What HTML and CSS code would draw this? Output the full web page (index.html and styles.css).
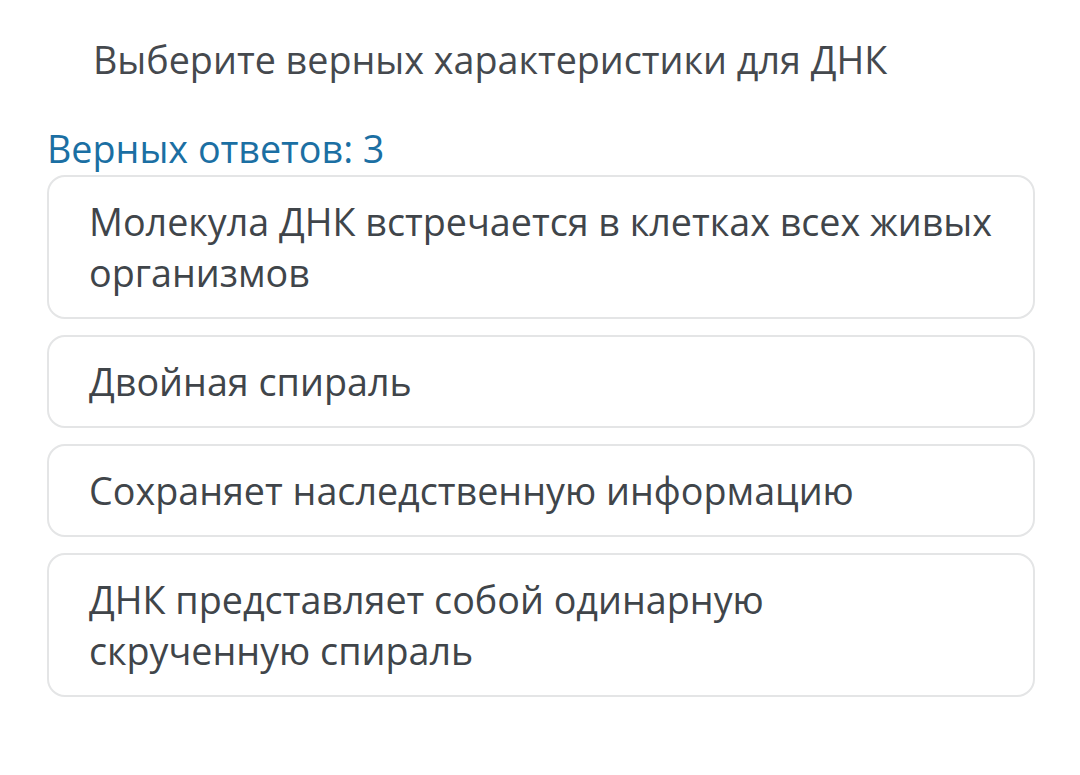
FILE: index.html
```html
<!DOCTYPE html>
<html lang="ru">
<head>
<meta charset="utf-8">
<link rel="stylesheet" href="styles.css">
</head>
<body>
<main class="quiz">
  <h1 class="question">Выберите верных характеристики для ДНК</h1>
  <div class="hint">Верных ответов: 3</div>
  <ul class="options">
    <li class="option">Молекула ДНК встречается в клетках всех живых организмов</li>
    <li class="option">Двойная спираль</li>
    <li class="option">Сохраняет наследственную информацию</li>
    <li class="option">ДНК представляет собой одинарную скрученную спираль</li>
  </ul>
</main>
</body>
</html>
```
FILE: styles.css
```css
html, body {
  margin: 0;
  padding: 0;
  background: #ffffff;
}
body {
  font-family: "Open Sans", "Noto Sans", sans-serif;
  color: #40454a;
}
.quiz {
  width: 988px;
  padding: 34px 0 0 47px;
}
.question {
  margin: 0 0 38px 0;
  padding-left: 46px;
  font-size: 37.7px;
  line-height: 51px;
  font-weight: 400;
  color: #45494e;
}
.hint {
  font-size: 37.7px;
  line-height: 51px;
  color: #1b6fa3;
  margin-bottom: 1px;
}
.options {
  list-style: none;
  margin: 0;
  padding: 0;
  display: flex;
  flex-direction: column;
  gap: 16px;
}
.option {
  border: 2px solid #e4e5e6;
  border-radius: 18px;
  padding: 19px 40.5px 19px 40px;
  font-size: 37.7px;
  line-height: 51px;
  color: #40454a;
}
```
